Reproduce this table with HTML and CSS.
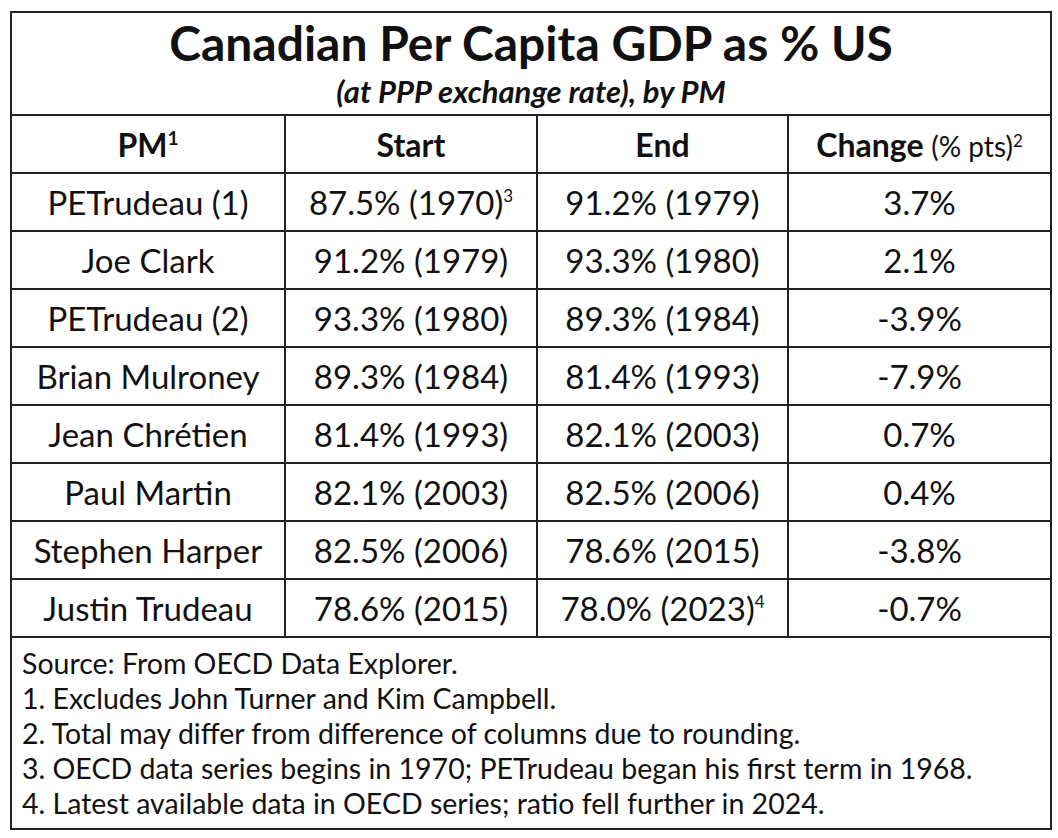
FILE: index.html
```html
<!DOCTYPE html>
<html lang="en">
<head>
<meta charset="utf-8">
<title>Canadian Per Capita GDP as % US</title>
<link rel="stylesheet" href="styles.css">
</head>
<body>
<table class="gdp">
  <colgroup>
    <col class="c-pm">
    <col class="c-start">
    <col class="c-end">
    <col class="c-change">
  </colgroup>
  <thead>
    <tr class="title-row">
      <th colspan="4">
        <div class="title">Canadian Per Capita GDP as % US</div>
        <div class="subtitle">(at PPP exchange rate), by PM</div>
      </th>
    </tr>
    <tr class="head-row">
      <th>PM<sup>1</sup></th>
      <th>Start</th>
      <th>End</th>
      <th>Change <span class="unit">(% pts)</span><sup class="thin">2</sup></th>
    </tr>
  </thead>
  <tbody>
    <tr><td>PETrudeau (1)</td><td>87.5% (1970)<sup>3</sup></td><td>91.2% (1979)</td><td>3.7%</td></tr>
    <tr><td>Joe Clark</td><td>91.2% (1979)</td><td>93.3% (1980)</td><td>2.1%</td></tr>
    <tr><td>PETrudeau (2)</td><td>93.3% (1980)</td><td>89.3% (1984)</td><td>-3.9%</td></tr>
    <tr><td>Brian Mulroney</td><td>89.3% (1984)</td><td>81.4% (1993)</td><td>-7.9%</td></tr>
    <tr><td>Jean Chrétien</td><td>81.4% (1993)</td><td>82.1% (2003)</td><td>0.7%</td></tr>
    <tr><td>Paul Martin</td><td>82.1% (2003)</td><td>82.5% (2006)</td><td>0.4%</td></tr>
    <tr><td>Stephen Harper</td><td>82.5% (2006)</td><td>78.6% (2015)</td><td>-3.8%</td></tr>
    <tr><td>Justin Trudeau</td><td>78.6% (2015)</td><td>78.0% (2023)<sup>4</sup></td><td>-0.7%</td></tr>
  </tbody>
  <tfoot>
    <tr class="notes-row">
      <td colspan="4">
        <p>Source: From OECD Data Explorer.</p>
        <p>1. Excludes John Turner and Kim Campbell.</p>
        <p>2. Total may differ from difference of columns due to rounding.</p>
        <p>3. OECD data series begins in 1970; PETrudeau began his first term in 1968.</p>
        <p>4. Latest available data in OECD series; ratio fell further in 2024.</p>
      </td>
    </tr>
  </tfoot>
</table>
</body>
</html>
```

FILE: styles.css
```css
html, body {
  margin: 0;
  padding: 0;
  background: #ffffff;
}

body {
  padding: 11px 0 0 10px;
  font-family: Lato, "Open Sans", "Liberation Sans", sans-serif;
  color: #111111;
}

.gdp {
  border-collapse: collapse;
  width: 1040px;
  table-layout: fixed;
  border: 2px solid #222222;
}

.c-pm { width: 274px; }
.c-start { width: 252px; }
.c-end { width: 251px; }
.c-change { width: 263px; }

.gdp th,
.gdp td {
  border: 2px solid #222222;
  padding: 0;
  text-align: center;
  vertical-align: middle;
}

.title-row th {
  height: 101px;
  vertical-align: top;
}

.title {
  font-size: 48px;
  font-weight: 700;
  line-height: 56px;
  padding-top: 2px;
}

.subtitle {
  font-size: 31px;
  font-style: italic;
  font-weight: 700;
  line-height: 40px;
}

.head-row th {
  height: 56px;
  font-size: 32px;
  font-weight: 700;
}

.unit {
  font-size: 28px;
  font-weight: 400;
}

sup {
  font-size: 0.6em;
  line-height: 0;
  vertical-align: 0.6em;
}

.thin {
  font-weight: 400;
  font-size: 17px;
}

.gdp tbody td {
  height: 56px;
  font-size: 33px;
  font-weight: 400;
}

.gdp tbody td sup {
  font-size: 17px;
  vertical-align: 0.75em;
}

.notes-row td {
  text-align: left;
  padding: 8px 0 7px 10px;
}

.notes-row p {
  margin: 0;
  font-size: 28.5px;
  line-height: 35px;
}
```
